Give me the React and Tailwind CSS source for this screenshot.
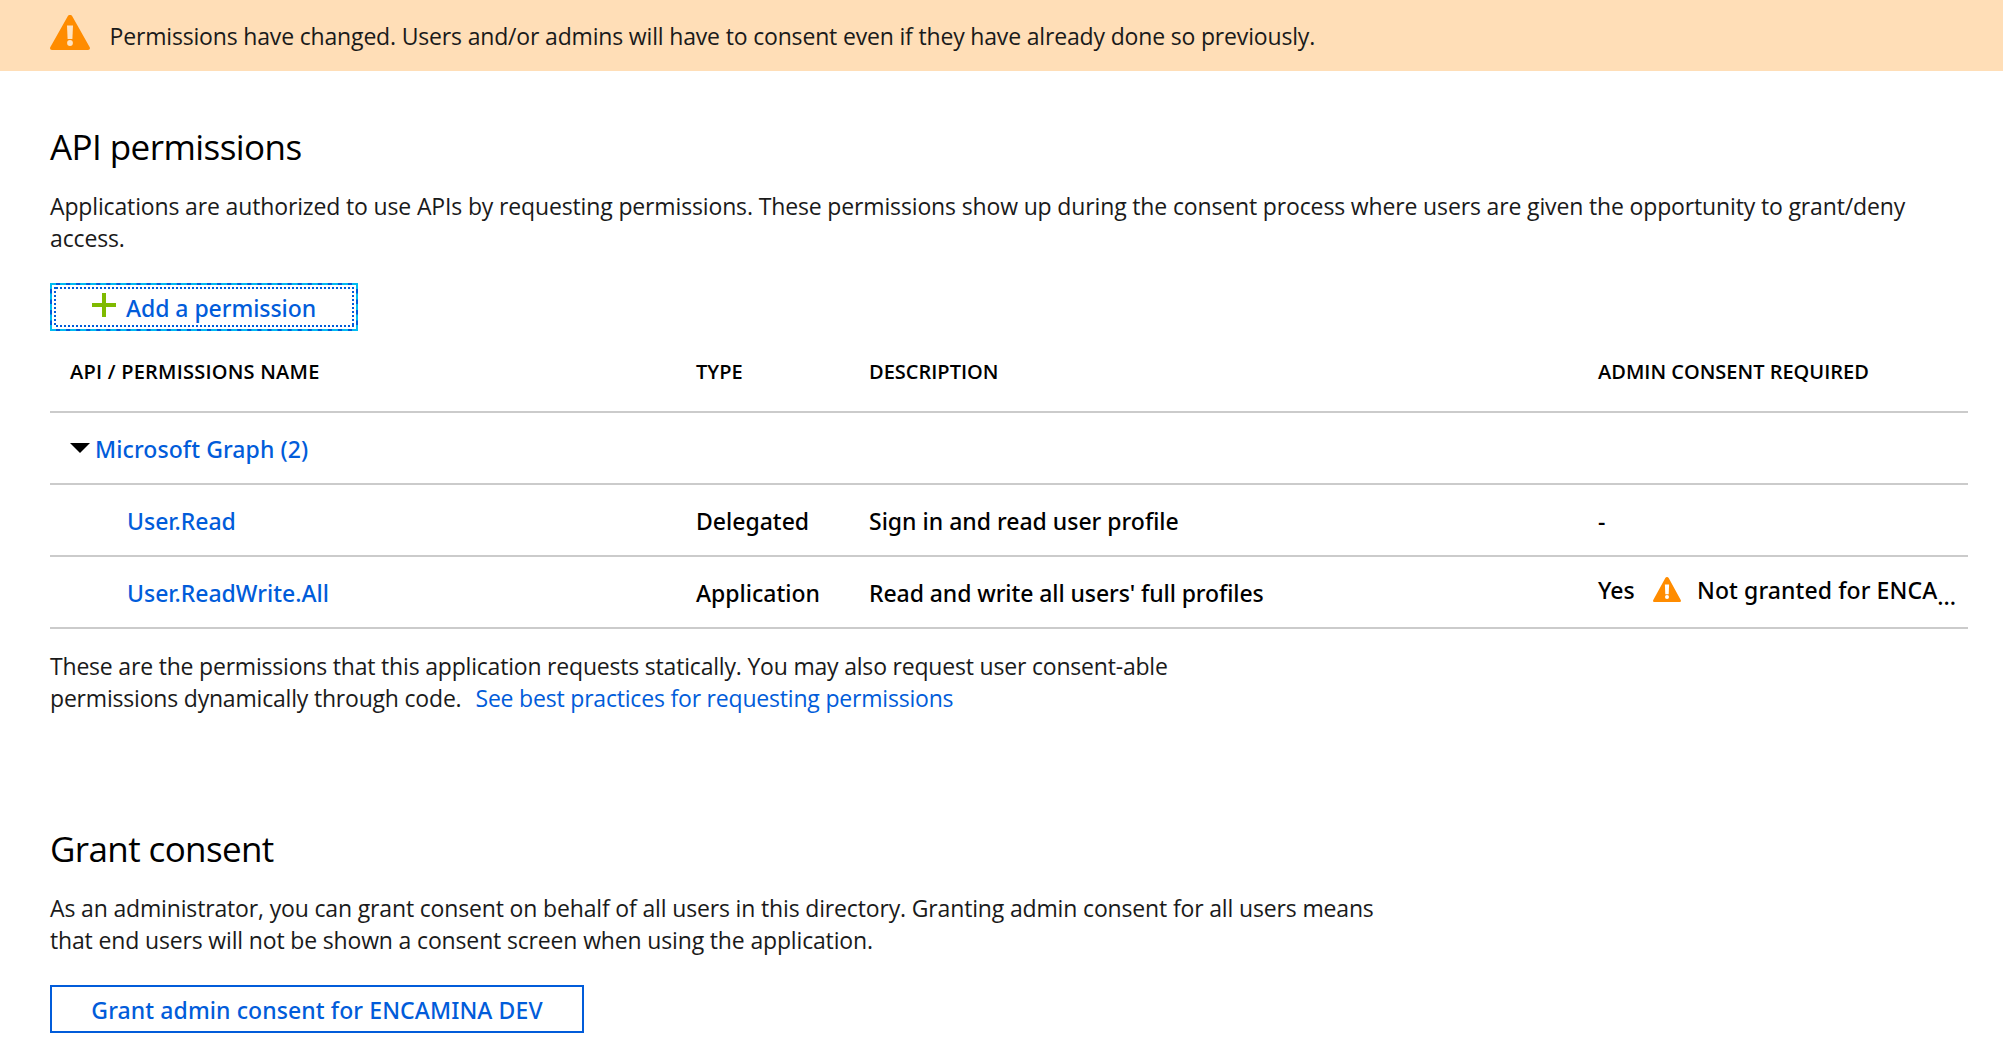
function WarningIcon({ className, markColor }) {
  return (
    <svg className={className} viewBox="0 0 40 35" preserveAspectRatio="none" aria-hidden="true">
      <path
        d="M20 0c1 0 1.900.5 2.400 1.400l17.200 30.700c.8 1.400.1 2.900-1.600 2.900H2C.3 35-.4 33.500.4 32.100L17.600 1.400C18.100.5 19 0 20 0z"
        fill="#ff8c00"
      />
      <path d="M17 10.500h6l-.6 13.500h-4.800z" fill={markColor} />
      <circle cx="20" cy="28" r="2.900" fill={markColor} />
    </svg>
  );
}

function AddButton() {
  return (
    <button className="relative mt-[29px] flex h-12 w-[308px] border-2 border-[#015cda] pl-10 text-[#015cda] outline-2 -outline-offset-2 outline-dashed outline-[#00bcf2]">
      <svg className="absolute left-0.5 top-0.5 h-10 w-[300px]" viewBox="0 0 300 40" aria-hidden="true">
        <g stroke="#015cda" strokeWidth="2" strokeDasharray="2 2" fill="none">
          <path d="M2 1H300" />
          <path d="M2 39H300" />
          <path d="M1 0V40" />
          <path d="M299 0V40" />
        </g>
      </svg>
      <svg className="mt-2 size-6" viewBox="0 0 24 24" aria-hidden="true">
        <path d="M12 0V24M0 12H24" stroke="#7fba00" strokeWidth="4" />
      </svg>
      <span className="ml-[10px] mt-[7px] font-['Noto_Sans'] font-medium tracking-[-0.05px]">Add a permission</span>
    </button>
  );
}

const rowClass =
  "grid h-[72px] grid-cols-[626px_173px_729px_1fr] border-b-2 border-[#cbcbcb] pl-5 pt-5 font-['Noto_Sans'] font-medium text-black";

export default function App() {
  return (
    <div className="min-h-[1064px] w-full bg-white font-['Open_Sans',sans-serif] text-[23px] leading-8 text-[#1a1a1a] whitespace-nowrap">
      <div className="flex h-[71px] bg-[#ffdeb7] pl-[50px]">
        <WarningIcon className="mt-[15px] h-[35px] w-10" markColor="#ffe3c2" />
        <span className="ml-[19.500px] mt-5 tracking-[-0.17px]">
          Permissions have changed. Users and/or admins will have to consent even if they have already done so
          previously.
        </span>
      </div>

      <main className="pl-[50px] pr-[35px]">
        <h1 className="mt-[52px] text-[35px] leading-[48px] tracking-[-0.57px] text-black">API permissions</h1>
        <p className="mt-[19px] tracking-[-0.145px]">
          Applications are authorized to use APIs by requesting permissions. These permissions show up during the
          consent process where users are given the opportunity to grant/deny
          <br />
          access.
        </p>

        <AddButton />

        <div className="grid h-[82px] grid-cols-[626px_173px_729px_1fr] border-b-2 border-[#cbcbcb] pl-5 pt-[25px] text-[20px] font-semibold text-black">
          <span className="tracking-[0.22px]">API / PERMISSIONS NAME</span>
          <span>TYPE</span>
          <span>DESCRIPTION</span>
          <span>ADMIN CONSENT REQUIRED</span>
        </div>

        <div className={rowClass}>
          <span className="flex text-[#015cda]">
            <svg className="mt-[10px] h-[10px] w-5" viewBox="0 0 20 10" aria-hidden="true">
              <path d="M0 0H20L10 10z" fill="#000" />
            </svg>
            <span className="ml-[5px] tracking-[0.1px]">Microsoft Graph (2)</span>
          </span>
        </div>

        <div className={rowClass}>
          <span className="pl-[57px] text-[#015cda]">User.Read</span>
          <span>Delegated</span>
          <span>Sign in and read user profile</span>
          <span>-</span>
        </div>

        <div className={rowClass}>
          <span className="pl-[57px] text-[#015cda]">User.ReadWrite.All</span>
          <span>Application</span>
          <span className="tracking-[-0.08px]">Read and write all users&apos; full profiles</span>
          <span className="-mt-[3px] flex">
            <span className="w-[55px]">Yes</span>
            <WarningIcon className="mt-[3px] h-[25px] w-7" markColor="#fff" />
            <span className="ml-4 tracking-[0.1px]">Not granted for ENCA</span>
            <span className="mt-1.5">...</span>
          </span>
        </div>

        <p className="mt-[21px] tracking-[-0.195px]">
          These are the permissions that this application requests statically. You may also request user consent-able
          <br />
          permissions dynamically through code.
          <a className="ml-[14px] text-[#015cda]">See best practices for requesting permissions</a>
        </p>

        <h1 className="mt-[111px] text-[35px] leading-[48px] tracking-[-0.62px] text-black">Grant consent</h1>
        <p className="mt-[19px] tracking-[-0.155px]">
          As an administrator, you can grant consent on behalf of all users in this directory. Granting admin consent
          for all users means
          <br />
          that end users will not be shown a consent screen when using the application.
        </p>

        <button className="mt-[29px] flex h-12 w-[534px] justify-center border-2 border-[#015cda] pt-[7px] font-['Noto_Sans'] font-medium tracking-[0.1px] text-[#015cda]">
          Grant admin consent for ENCAMINA DEV
        </button>
      </main>
    </div>
  );
}
